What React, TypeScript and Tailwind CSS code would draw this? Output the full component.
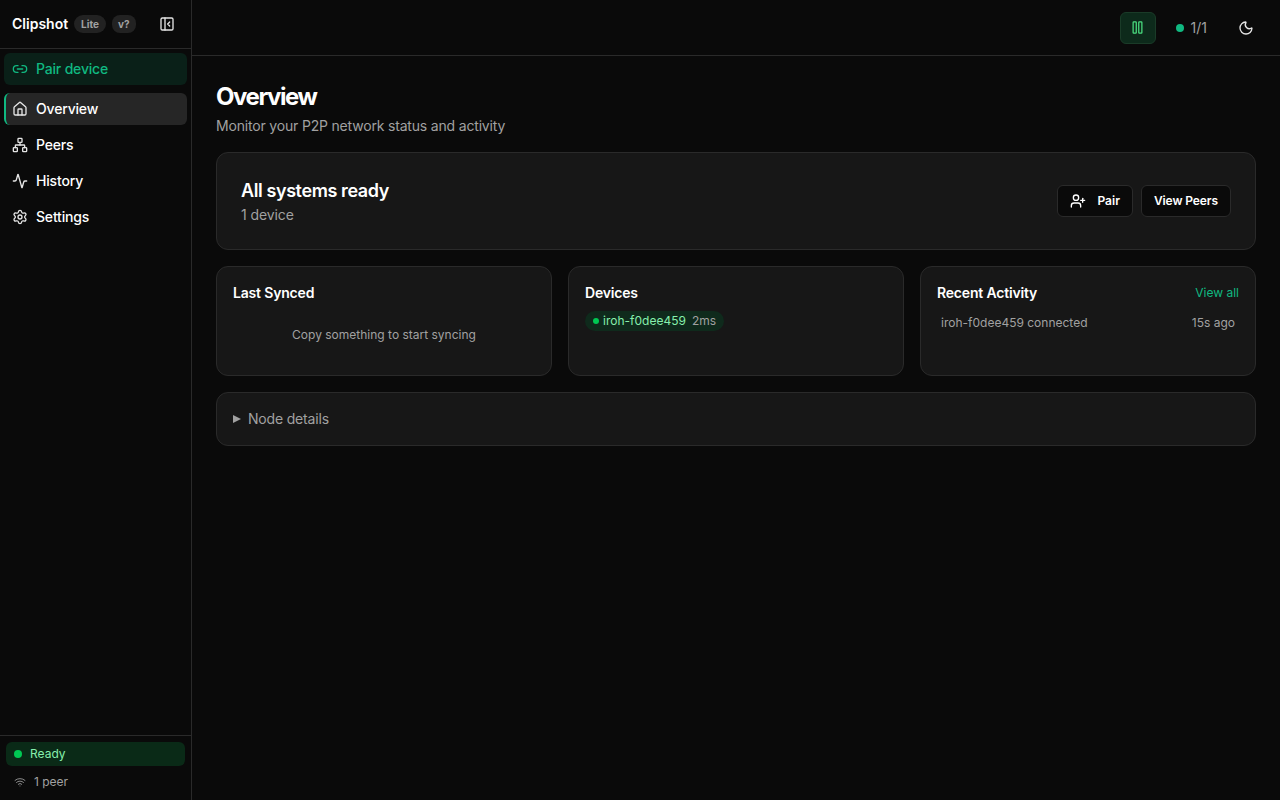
import React from "react";
import { Activity, House, Link2, Moon, Network, PanelLeftClose, Pause, Settings, UserPlus, Wifi } from "lucide-react";

const navItems = [
  { label: "Overview", icon: House, active: true },
  { label: "Peers", icon: Network, active: false },
  { label: "History", icon: Activity, active: false },
  { label: "Settings", icon: Settings, active: false },
];

function Sidebar() {
  return (
    <aside className="w-[192px] shrink-0 h-full flex flex-col border-r border-[#2a2a2a] bg-[#0a0a0a]">
      <div className="h-[49px] shrink-0 flex items-center pl-3 pr-4 border-b border-[#2a2a2a]">
        <span className="text-sm font-semibold text-white">Clipshot</span>
        <span className="ml-[6px] h-[18px] px-[7px] flex items-center rounded-full bg-[#222222] text-[10px] font-bold text-[#a1a1a1]">Lite</span>
        <span className="ml-[6px] h-[18px] px-[6px] flex items-center rounded-lg bg-[#222222] text-[10px] font-bold text-[#a1a1a1]">v?</span>
        <PanelLeftClose className="ml-auto text-[#e5e5e5]" size={16} strokeWidth={2} />
      </div>
      <div className="px-1 pt-1">
        <div className="h-8 flex items-center gap-2 pl-2 rounded-md bg-[#0a2018] text-[#10b981] text-sm font-medium tracking-[-0.18px]">
          <Link2 size={16} />
          Pair device
        </div>
      </div>
      <nav className="px-1 pt-2 flex flex-col gap-1">
        {navItems.map((item) => {
          const Icon = item.icon;
          return (
            <div
              key={item.label}
              className={
                item.active
                  ? "h-8 flex items-center gap-2 pl-[6px] rounded-md bg-[#262626] border-l-2 border-[#10b981] text-white text-sm font-medium tracking-[-0.18px]"
                  : "h-8 flex items-center gap-2 pl-2 rounded-md text-white text-sm font-medium tracking-[-0.18px]"
              }
            >
              <Icon size={16} className="text-[#e5e5e5]" />
              {item.label}
            </div>
          );
        })}
      </nav>
      <div className="mt-auto h-[65px] border-t border-[#2a2a2a] px-[6px] pt-[6px]">
        <div className="h-6 flex items-center gap-2 pl-2 rounded-md bg-[#0a2a17] text-xs text-[#86efac]">
          <span className="w-2 h-2 rounded-full bg-[#00c853]" />
          Ready
        </div>
        <div className="mt-[6px] h-[20px] flex items-center gap-[8px] pl-2 text-xs text-[#a1a1a1]">
          <Wifi size={12} className="text-[#8a8a8a]" />
          1 peer
        </div>
      </div>
    </aside>
  );
}

function Header() {
  return (
    <header className="h-[56px] shrink-0 flex items-center justify-end border-b border-[#2a2a2a] pr-[26px]">
      <div className="w-9 h-8 flex items-center justify-center rounded-md bg-[#0d2a1b] border border-[#1a3b28] text-[#4ade80]">
        <Pause size={15} />
      </div>
      <div className="ml-5 flex items-center gap-[7px] text-sm text-[#a1a1a1]">
        <span className="w-2 h-2 rounded-full bg-[#10b981]" />
        1/1
      </div>
      <Moon className="ml-[31px] text-[#e5e5e5]" size={16} />
    </header>
  );
}

function Card({ title, action, children }: { title: string; action?: React.ReactNode; children: React.ReactNode }) {
  return (
    <div className="h-[110px] rounded-xl border border-[#2a2a2a] bg-[#171717] px-4 pt-4">
      <div className="h-5 flex items-center justify-between">
        <h3 className="text-sm font-semibold tracking-[-0.18px] text-white">{title}</h3>
        {action}
      </div>
      {children}
    </div>
  );
}

export default function App() {
  return (
    <div className="w-full h-screen flex overflow-hidden bg-[#0a0a0a] font-['Inter',sans-serif]">
      <Sidebar />
      <div className="flex-1 flex flex-col">
        <Header />
        <main className="px-6 pt-[25px]">
          <h1 className="text-2xl leading-8 font-bold tracking-[-1.45px] text-white">Overview</h1>
          <p className="mt-[3px] text-sm leading-5 tracking-[-0.18px] text-[#a1a1a1]">Monitor your P2P network status and activity</p>
          <div className="mt-4 h-[98px] flex items-center justify-between rounded-xl border border-[#2a2a2a] bg-[#171717] px-6">
            <div>
              <div className="text-lg leading-7 font-semibold tracking-[-0.4px] text-white">All systems ready</div>
              <div className="text-sm leading-5 tracking-[-0.1px] text-[#a1a1a1]">1 device</div>
            </div>
            <div className="flex items-center gap-2">
              <button className="h-8 flex items-center gap-[11px] px-3 rounded-md border border-[#2a2a2a] bg-[#0a0a0a] text-xs font-semibold text-white">
                <UserPlus size={16} />
                Pair
              </button>
              <button className="h-8 flex items-center px-3 rounded-md border border-[#2a2a2a] bg-[#0a0a0a] text-xs font-semibold tracking-[-0.1px] text-white">
                View Peers
              </button>
            </div>
          </div>
          <div className="mt-4 grid grid-cols-3 gap-4">
            <Card title="Last Synced">
              <p className="mt-[24px] text-center text-xs leading-4 text-[#a1a1a1]">Copy something to start syncing</p>
            </Card>
            <Card title="Devices">
              <div className="mt-[8px] inline-flex h-5 items-center rounded-full bg-[#0f2a1c] pl-2 pr-2 text-xs">
                <span className="w-[6px] h-[6px] rounded-full bg-[#00c853]" />
                <span className="ml-1 text-[#86efac]">iroh-f0dee459</span>
                <span className="ml-[6px] text-[#a1a1a1]">2ms</span>
              </div>
            </Card>
            <Card
              title="Recent Activity"
              action={<span className="text-xs text-[#10b981]">View all</span>}
            >
              <div className="mt-[12px] flex justify-between px-1 text-xs leading-4 text-[#a1a1a1]">
                <span>iroh-f0dee459 connected</span>
                <span>15s ago</span>
              </div>
            </Card>
          </div>
          <div className="mt-4 h-[54px] flex items-center gap-[7px] rounded-xl border border-[#2a2a2a] bg-[#171717] px-4 text-sm tracking-[-0.18px] text-[#a1a1a1]">
            <span className="w-0 h-0 border-y-[4.5px] border-y-transparent border-l-[8px] border-l-[#a1a1a1]" />
            Node details
          </div>
        </main>
      </div>
    </div>
  );
}
